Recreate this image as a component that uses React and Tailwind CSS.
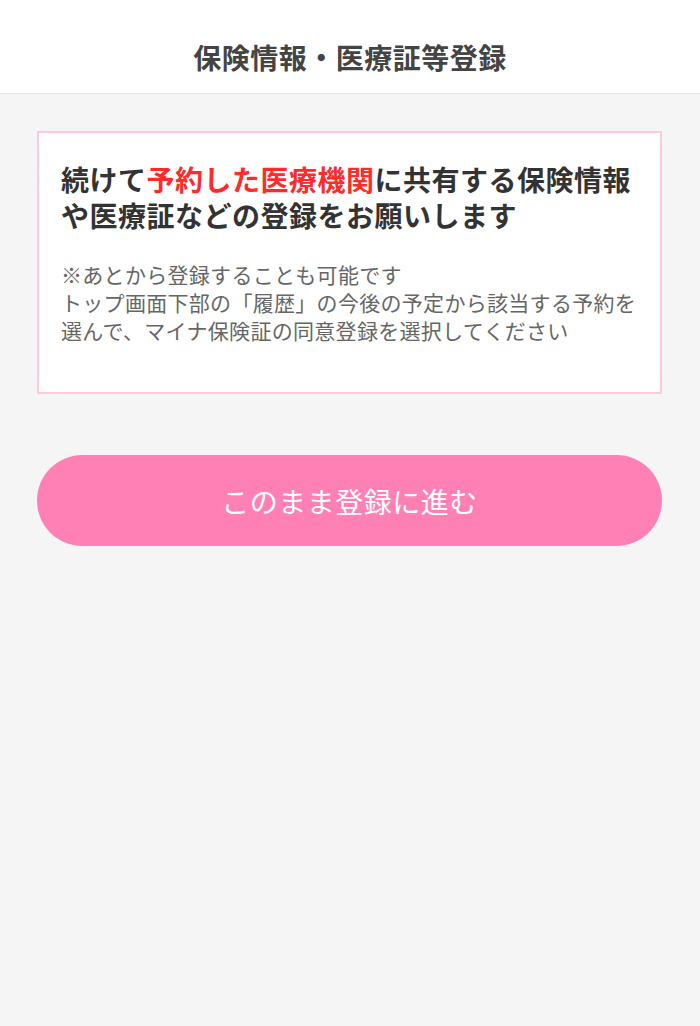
import React from 'react'

function App() {
    return (
        <div
            className="min-h-[1026px] bg-[#f5f5f5]"
            style={{ fontFamily: '"Noto Sans CJK JP", "Noto Sans", sans-serif' }}
        >
            <header className="h-[94px] bg-white border-b border-[#e6e6e6] flex items-center justify-center pt-[20px]">
                <h1 className="text-[28px] font-bold text-[#444] leading-none tracking-[0.5px]">
                    保険情報・医療証等登録
                </h1>
            </header>

            <main className="pl-[37px] pr-[38px] pt-[37px]">
                <section className="bg-white border-2 border-[#ffc9dd] pl-[22px] pr-[18px] pt-[28px] pb-[48px]">
                    <p className="text-[28px] font-bold text-[#333] leading-[36px] tracking-[0.5px]">
                        続けて<span className="text-[#ff2a2a]">予約した医療機関</span>に共有する保険情報や医療証などの登録をお願いします
                    </p>
                    <p className="mt-[27px] text-[21px] text-[#666] leading-[28px] tracking-[0.3px]">
                        ※あとから登録することも可能です
                        <br />
                        トップ画面下部の「履歴」の今後の予定から該当する予約を選んで、マイナ保険証の同意登録を選択してください
                    </p>
                </section>

                <button
                    type="button"
                    className="mt-[61px] w-full h-[91px] rounded-full bg-[#ff80b4] text-white text-[28px] leading-none tracking-[0.5px]"
                >
                    このまま登録に進む
                </button>
            </main>
        </div>
    );
}

export default App;
